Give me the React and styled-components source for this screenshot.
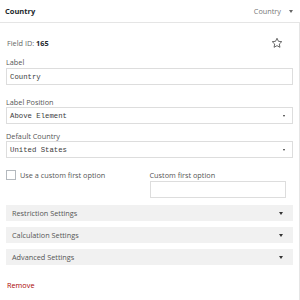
import styled, { createGlobalStyle } from 'styled-components'

const Global = createGlobalStyle`
  html, body {
    margin: 0;
    padding: 0;
    background: #fff;
  }
  body {
    font-family: "Open Sans", "Liberation Sans", sans-serif;
    font-size: 7.3px;
    color: #444;
  }
`

const Panel = styled.div`
  width: 300px;
  height: 300px;
  display: flex;
  flex-direction: column;
  box-sizing: border-box;
`

const Header = styled.div`
  height: 22px;
  border-bottom: 1px solid #e5e5e5;
  display: flex;
  align-items: center;
  padding: 0 7px 0 5px;
`

const Title = styled.h3`
  margin: 0;
  font-size: 7.5px;
  font-weight: 700;
  color: #23282d;
  flex: 1;
`

const TypeName = styled.span`
  color: #777;
  font-size: 7.3px;
  margin-right: 8px;
`

const Caret = styled.span`
  width: 0;
  height: 0;
  border-left: ${p => p.$size || 2}px solid transparent;
  border-right: ${p => p.$size || 2}px solid transparent;
  border-top: ${p => (p.$size || 2) + 1}px solid ${p => p.$color || '#555'};
`

const Body = styled.div`
  flex: 1;
  border-right: 1px solid #e5e5e5;
  padding: 15px 6px 0 6px;
`

const IdRow = styled.div`
  display: flex;
  align-items: center;
  justify-content: space-between;
  height: 10px;
  padding-left: 1px;
  color: #666;
  b {
    color: #23282d;
    font-weight: 700;
  }
`

const Star = styled.svg`
  width: 12px;
  height: 12px;
  margin-right: 10px;
`

const Field = styled.div`
  margin-top: ${p => p.$top}px;
`

const Label = styled.label`
  display: block;
  line-height: 10px;
  color: #555;
`

const TextBox = styled.div`
  height: 15px;
  border: 1px solid #ddd;
  margin-top: 1px;
  display: flex;
  align-items: center;
  padding: 0 7px 0 3px;
  font-family: "Liberation Mono", monospace;
  font-size: 7.3px;
  color: #3c3c3c;
  background: #fff;
`

const SelectBox = styled(TextBox)`
  justify-content: space-between;
  margin-top: 0;
`

const Split = styled.div`
  display: grid;
  grid-template-columns: 1fr 1fr;
  margin-top: 12px;
`

const Check = styled.label`
  display: flex;
  align-items: flex-start;
  gap: 4px;
  line-height: 10px;
  color: #555;
`

const Box = styled.span`
  width: 8px;
  height: 8px;
  border: 1px solid #b4b9be;
  background: #fff;
`

const RightCell = styled.div`
  padding-right: 7px;
`

const Sections = styled.div`
  display: flex;
  flex-direction: column;
  gap: 6px;
  margin-top: 7px;
`

const Section = styled.div`
  height: 16px;
  background: #f1f1f1;
  display: flex;
  align-items: center;
  justify-content: space-between;
  padding: 0 10px 0 6px;
  color: #555;
`

const Remove = styled.a`
  display: block;
  margin-top: 15px;
  padding-left: 1px;
  line-height: 10px;
  color: #a00;
  text-decoration: none;
`

const sections = ['Restriction Settings', 'Calculation Settings', 'Advanced Settings']

export default function App() {
  return (
    <Panel>
      <Global />
      <Header>
        <Title>Country</Title>
        <TypeName>Country</TypeName>
        <Caret $color="#666" />
      </Header>
      <Body>
        <IdRow>
          <span>Field ID: <b>165</b></span>
          <Star viewBox="0 0 24 24" fill="none" stroke="#444" strokeWidth="1.6" strokeLinejoin="round">
            <path d="M12 2.5l2.9 6.1 6.6.8-4.9 4.6 1.3 6.6L12 17.3l-5.9 3.3 1.3-6.6-4.9-4.6 6.6-.8z" />
          </Star>
        </IdRow>
        <Field $top={9}>
          <Label>Label</Label>
          <TextBox>Country</TextBox>
        </Field>
        <Field $top={12}>
          <Label>Label Position</Label>
          <SelectBox>Above Element<Caret $size={1.5} $color="#333" /></SelectBox>
        </Field>
        <Field $top={7}>
          <Label>Default Country</Label>
          <SelectBox>United States<Caret $size={1.5} $color="#333" /></SelectBox>
        </Field>
        <Split>
          <Check><Box />Use a custom first option</Check>
          <RightCell>
            <Label>Custom first option</Label>
            <TextBox />
          </RightCell>
        </Split>
        <Sections>
          {sections.map(s => (
            <Section key={s}>{s}<Caret $size={2} $color="#333" /></Section>
          ))}
        </Sections>
        <Remove href="#">Remove</Remove>
      </Body>
    </Panel>
  )
}
